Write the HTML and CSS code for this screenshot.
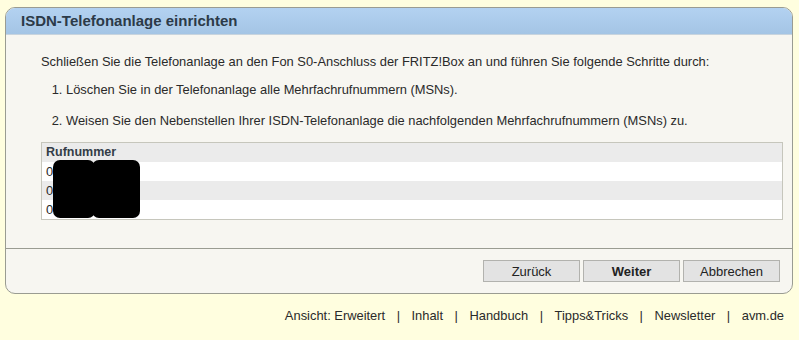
FILE: index.html
```html
<!DOCTYPE html>
<html lang="de">
<head>
  <meta charset="UTF-8" />
  <title>ISDN-Telefonanlage einrichten</title>
  <link rel="stylesheet" href="styles.css">
</head>
<body>
  <div class="panel">
    <div class="panel-head">ISDN-Telefonanlage einrichten</div>
    <div class="panel-body">
      <p class="intro">Schließen Sie die Telefonanlage an den Fon S0-Anschluss der FRITZ!Box an und führen Sie folgende Schritte durch:</p>
      <ol class="steps">
        <li>Löschen Sie in der Telefonanlage alle Mehrfachrufnummern (MSNs).</li>
        <li>Weisen Sie den Nebenstellen Ihrer ISDN-Telefonanlage die nachfolgenden Mehrfachrufnummern (MSNs) zu.</li>
      </ol>
      <div class="table-wrap">
        <table class="msn-table">
          <tr class="head"><th>Rufnummer</th></tr>
          <tr><td>0</td></tr>
          <tr class="alt"><td>0</td></tr>
          <tr><td>0</td></tr>
        </table>
        <div class="redact one"></div>
        <div class="redact two"></div>
      </div>
    </div>
    <div class="panel-foot">
      <button>Zurück</button>
      <button class="primary">Weiter</button>
      <button>Abbrechen</button>
    </div>
  </div>

  <div class="links">
    <a href="#">Ansicht: Erweitert</a><span>|</span>
    <a href="#">Inhalt</a><span>|</span>
    <a href="#">Handbuch</a><span>|</span>
    <a href="#">Tipps&amp;Tricks</a><span>|</span>
    <a href="#">Newsletter</a><span>|</span>
    <a href="#">avm.de</a>
  </div>
</body>
</html>
```

FILE: styles.css
```css
body {
  margin: 0;
  background-color: #fffedf;
  font-family: "Liberation Sans", Arial, sans-serif;
  font-size: 12.9px;
  color: #2a2a2a;
}
.panel {
  margin: 7px 6px 0 5px;
  border: 1px solid #9a9c92;
  border-radius: 10px;
  background-color: #f7f6f1;
  overflow: hidden;
}
.panel-head {
  height: 26px;
  line-height: 26px;
  padding-left: 15px;
  background: linear-gradient(#b3d2f1, #a4c5e5);
  border-bottom: 1px solid #c8d4de;
  font-weight: bold;
  font-size: 15px;
  color: #2c3a48;
}
.panel-body {
  padding: 19px 10px 28px 35px;
}
.intro {
  margin: 0;
  line-height: 15px;
}
.steps {
  margin: 13px 0 0 0;
  padding-left: 25px;
  line-height: 15px;
}
.steps li {
  margin-bottom: 16px;
}
.steps li:last-child {
  margin-bottom: 14px;
}
.table-wrap {
  position: relative;
}
.msn-table {
  width: 742px;
  border: 1px solid #c6c6bc;
  border-collapse: collapse;
  background-color: #fff;
}
.msn-table th,
.msn-table td {
  height: 19px;
  padding: 0 4px;
  text-align: left;
  line-height: 15px;
}
.msn-table th {
  font-weight: bold;
  font-size: 12.5px;
  color: #333d47;
}
.msn-table .head,
.msn-table .alt {
  background-color: #ebebeb;
}
.redact {
  position: absolute;
  top: 18px;
  height: 58px;
  background-color: #000;
  border-radius: 7px;
}
.redact.one {
  left: 12px;
  width: 42px;
}
.redact.two {
  left: 51px;
  width: 48px;
}
.panel-foot {
  border-top: 1px solid #9a9c92;
  padding: 11px 12px 11px 0;
  display: flex;
  justify-content: flex-end;
  gap: 3px;
}
button {
  width: 97px;
  height: 22px;
  background-color: #e3e3e3;
  border: 1px solid #b2b2ae;
  font-family: "Liberation Sans", Arial, sans-serif;
  font-size: 13px;
  color: #222;
  padding: 0;
}
button.primary {
  font-weight: bold;
}
.links {
  display: flex;
  justify-content: flex-end;
  padding: 14px 15px 0 0;
  font-size: 12.9px;
}
.links a {
  color: #2a2a2a;
  text-decoration: none;
}
.links span {
  padding: 0 11.5px;
  color: #2a2a2a;
}
```
